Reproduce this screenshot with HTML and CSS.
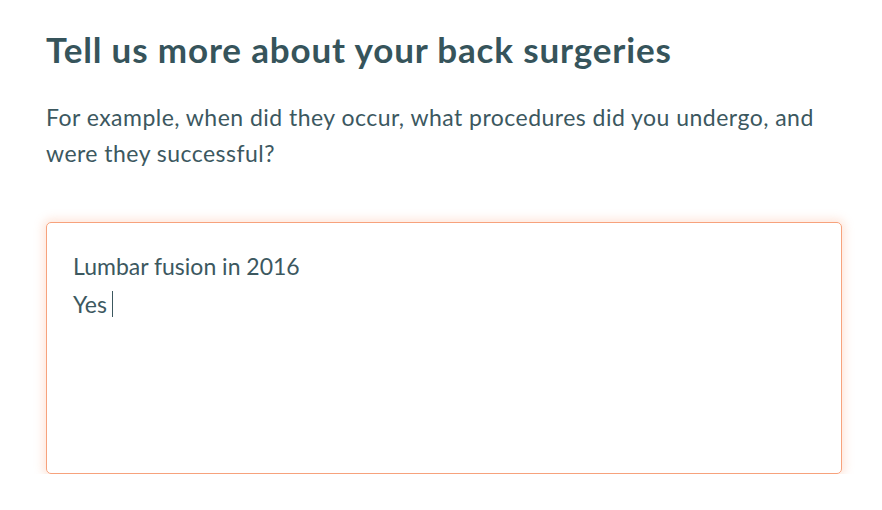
FILE: index.html
```html
<!DOCTYPE html>
<html>
<head>
<meta charset="utf-8">
<link rel="stylesheet" href="styles.css">
</head>
<body>
<main class="page">
  <h1 class="title">Tell us more about your back surgeries</h1>
  <p class="hint">For example, when did they occur, what procedures did you undergo, and were they successful?</p>
  <div class="field">
    <div class="line">Lumbar fusion in 2016</div>
    <div class="line">Yes<span class="caret"></span></div>
  </div>
</main>
</body>
</html>
```
FILE: styles.css
```css
html, body {
  margin: 0;
  padding: 0;
  background: #ffffff;
}
body {
  font-family: Lato, "Open Sans", sans-serif;
  color: #35525a;
}
.page {
  padding: 27px 40px 0 46px;
  display: flex;
  flex-direction: column;
}
.title {
  margin: 0;
  font-size: 35px;
  font-weight: 700;
  line-height: 44px;
  letter-spacing: 0.85px;
  color: #36545b;
}
.hint {
  margin: 28px 0 0;
  font-size: 23px;
  line-height: 36px;
  letter-spacing: 0.47px;
  width: 790px;
  color: #3c585f;
}
.field {
  box-sizing: border-box;
  margin-top: 51px;
  width: 796px;
  height: 252px;
  border: 1px solid #f7a27c;
  border-radius: 5px;
  box-shadow: 0 0 10px 3px rgba(250, 165, 125, 0.28);
  padding: 24px 0 0 26px;
  font-size: 23px;
  line-height: 38px;
  color: #3c585f;
}
.line {
  display: flex;
  align-items: center;
}
.caret {
  display: inline-block;
  width: 1px;
  height: 26px;
  margin-left: 5px;
  background: #3c585f;
}
```
